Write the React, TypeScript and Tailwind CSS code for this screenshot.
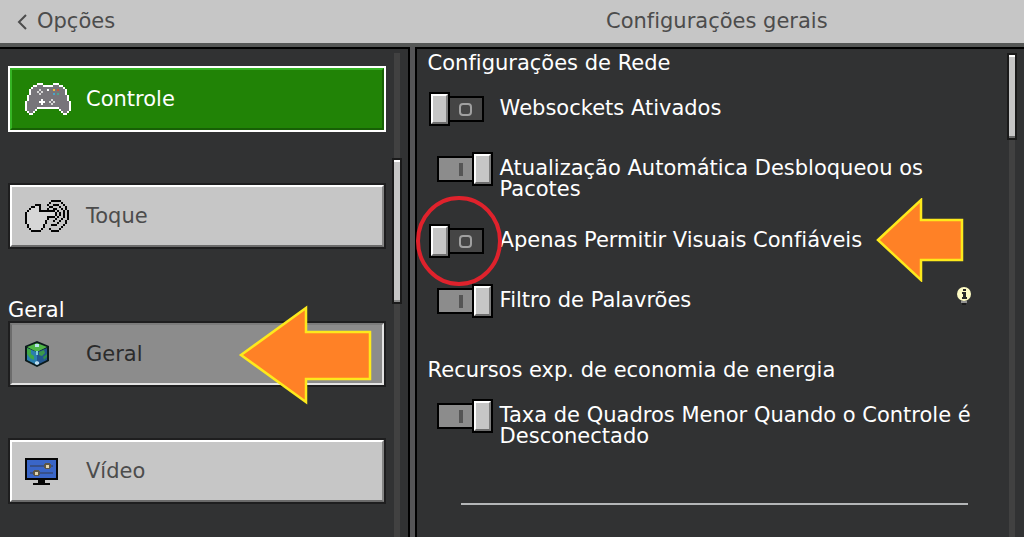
import type { ReactNode } from "react";

const PALETTE: Record<string, string> = {
  W: "#ffffff",
  G: "#77757a",
  L: "#d6d6d6",
  K: "#050505",
  Y: "#f0b93a",
  R: "#c2573f",
  B: "#4aa3c9",
  T: "#4fa58c",
};

const CONTROLLER = [
  "......WWW.....WWW......",
  "....WWGGGWWWWWGGGWW....",
  "...WGGGGGGGGGGGGGGGW...",
  "..WGGGGLGGGWGGYGRGGGW..",
  "..WGGGLGLGGGGGGGGGGGW..",
  "..WGGGGLGGGGGGBGTGGGW..",
  ".WGGGGGGGGGGGGGGGGGGGW.",
  ".WGGGGGGGGGGGGGGGGGGGW.",
  ".WGGGGGGWGGGGLGGGGGGGW.",
  "WGGGGGGWWWGGLGLGGGGGGGW",
  "WGGGGGGGWGGGGLGGGGGGGGW",
  "WGGGGGGGGGGGGGGGGGGGGGW",
  "WGGGGGWWWWWWWWWWWGGGGGW",
  "WGGGGW...........WGGGGW",
  ".WGGW.............WGGW.",
  "..WW...............WW..",
];

const HAND = [
  ".............KKKKK....",
  "............K.....K...",
  ".....KKK...K..KKK..K..",
  "...KKLLK....KK...K..K.",
  "..KLLLLK...K..KK..K.K.",
  ".KLLLLLKKKKKKKK.K..K.K",
  "KLLLLLLLLLLLLLLK.K.K.K",
  "KLLLLLLLLLLLLLLK.K.K.K",
  "KLLLLLLLLLLKKKK.K..K.K",
  "KLLLLLLLLLLK...K..K..K",
  "KLLLLLLLLLK...K..K..K.",
  "KLLLLLLLLLK.....K...K.",
  ".KLLLLLLLK...KKK...K..",
  ".KLLLLLLLK........K...",
  "..KLLLLLK...K....K....",
  "...KKKKK.....KKKK.....",
];

const PixelIcon = ({ rows, className }: { rows: string[]; className: string }) => (
  <svg viewBox={`0 0 ${rows[0].length} ${rows.length}`} className={className} shapeRendering="crispEdges" aria-hidden="true">
    {rows.flatMap((row, y) =>
      row.split("").map((c, x) =>
        c === "." ? null : <rect key={`${x}-${y}`} x={x} y={y} width="1" height="1" fill={PALETTE[c]} />
      )
    )}
  </svg>
);

const CubeIcon = () => (
  <svg viewBox="0 0 24 26" className="h-[26px] w-6" aria-hidden="true">
    <path d="M12 0 24 5V20L12 26 0 20V5Z" fill="#0b1a1c" />
    <path d="M12 2 22 6 12 11 2 6Z" fill="#4fb548" />
    <path d="M2 7 12 11V24L2 19Z" fill="#2b7fae" />
    <path d="M22 7 12 11V24L22 19Z" fill="#22568f" />
    <path d="M2 7 6 9V13L9 15V19L5 17 2 13Z" fill="#3fa845" />
    <path d="M14 11 19 9 20 12 17 15 14 14Z" fill="#3a9a4a" />
    <path d="M18 16 22 13V16L19 19Z" fill="#2f8b50" />
    <path d="M10 3H14V6H10Z" fill="#b9e3ee" />
    <path d="M11 10H13V14H11Z" fill="#83c9dd" />
    <path d="M10 21 12 20 14 21V23L12 24 10 23Z" fill="#b9dcee" />
  </svg>
);

const MonitorIcon = () => (
  <svg viewBox="0 0 33 27" className="h-[27px] w-[33px]" shapeRendering="crispEdges" aria-hidden="true">
    <path d="M0 0H33V22H20V25H25V27H8V25H13V22H0Z" fill="#060606" />
    <rect x="2" y="2" width="29" height="18" fill="#3a66c8" />
    <path d="M5 7H28V9H5ZM5 14H28V16H5Z" fill="#37508a" />
    <path d="M20 5H25V6H26V10H25V11H20V10H19V6H20ZM9 12H14V13H15V17H14V18H9V17H8V13H9Z" fill="#5c5648" />
    <rect x="21" y="7" width="3" height="3" fill="#e3d6b0" />
    <rect x="10" y="14" width="3" height="3" fill="#e3d6b0" />
  </svg>
);

const InfoIcon = () => (
  <svg viewBox="0 0 14 18" className="h-[18px] w-[14px]" aria-hidden="true">
    <ellipse cx="7" cy="7" rx="7" ry="7" fill="#fdfbc4" />
    <path d="M6 2H9V4H6ZM5 5H9V10H10V12H5V10H6V7H5Z" fill="#2a2a2a" />
    <path d="M4 14H10V16H4Z" fill="#8f8f8f" />
    <path d="M5 16H9V18H5Z" fill="#1b1b1b" />
  </svg>
);

type MenuButtonProps = { icon: ReactNode; label: string; variant?: "active" | "pressed" | "normal"; children?: ReactNode };

const MenuButton = ({ icon, label, variant = "normal", children }: MenuButtonProps) => {
  const outer = { active: "border-white", pressed: "border-[#1e1e1f]", normal: "border-[#1e1e1f]" }[variant];
  const inner = {
    active: "border-t-[#35b424] border-l-[#35b424] border-r-[#176005] border-b-[#176005] bg-[#218306] text-white",
    pressed: "border-t-[#7c7c7c] border-l-[#6c6c6c] border-r-[#e3e3e3] border-b-[#e3e3e3] bg-[#8c8c8c] text-[#2b2b2b]",
    normal: "border-t-white border-l-white border-r-[#858585] border-b-[#6b6b6b] bg-[#c6c6c6] text-[#4c4c4c]",
  }[variant];

  return (
    <button type="button" className={`relative block w-full border-2 text-left ${outer}`}>
      <span className={`flex h-[62px] items-center border-2 pl-[13px] ${inner}`}>
        <span className="w-[61px]">{icon}</span>
        <span>{label}</span>
      </span>
      {children}
    </button>
  );
};

const Knob = () => (
  <span className="h-[34px] w-[21px] border-2 border-black">
    <span className="block h-full border-2 border-t-white border-l-white border-r-[#7d7d7d] border-b-[#6d6d6d] bg-[#c6c6c6]" />
  </span>
);

type SettingProps = { label: string; on?: boolean; mark?: ReactNode; children?: ReactNode };

const Setting = ({ label, on = false, mark, children }: SettingProps) => (
  <div className="relative flex min-h-9 items-start">
    <label className="flex items-start">
      <input type="checkbox" defaultChecked={on} className="sr-only" />
      <span className={`relative flex w-[72px] shrink-0 items-center ${on ? "pl-[9px]" : "pl-px"}`}>
        {on ? (
          <>
            <span className="flex h-[26px] w-[35px] items-center justify-end border-2 border-r-0 border-black bg-[#8c8c8c] pr-[9px]">
              <span className="h-[13px] w-1 bg-[#555555]" />
            </span>
            <Knob />
          </>
        ) : (
          <>
            <Knob />
            <span className="flex h-[26px] w-[34px] items-center justify-center border-2 border-l-0 border-black bg-[#454545]">
              <span className="h-[13px] w-[13px] rounded-sm border-2 border-[#a0a0a0]" />
            </span>
          </>
        )}
        {mark}
      </span>
      <span className="pt-[6px] pr-3">{label}</span>
    </label>
    {children}
  </div>
);

export default function App() {
  return (
    <div className="flex min-h-screen flex-col bg-[#313233] font-['DejaVu_Sans',sans-serif] text-[21px] leading-[21px] text-white [font-variant-ligatures:none]">
      <header className="flex h-[47px] items-center border-b-4 border-[#555756] bg-[#c6c6c6] text-[#4c4c4c]">
        <div className="w-2/5 pl-[17px]">
          <button type="button" className="flex items-center gap-[10px]">
            <svg viewBox="0 0 10 16" className="h-4 w-[10px]" fill="none" stroke="currentColor" strokeWidth="2" aria-hidden="true">
              <path d="M9 1 2 8 9 15" />
            </svg>
            Opções
          </button>
        </div>
        <h1 className="flex-1 text-center">Configurações gerais</h1>
      </header>

      <div className="flex flex-1">
        <aside className="flex w-2/5 border-t-2 border-r-2 border-black pl-2">
          <nav className="flex-1 pt-[17px] pb-8">
            <MenuButton variant="active" label="Controle" icon={<PixelIcon rows={CONTROLLER} className="h-8 w-[46px]" />} />
            <div className="mt-[51px]">
              <MenuButton label="Toque" icon={<PixelIcon rows={HAND} className="h-8 w-[44px]" />} />
            </div>
            <h2 className="mt-[51px]">Geral</h2>
            <MenuButton variant="pressed" label="Geral" icon={<CubeIcon />}>
              <svg viewBox="0 0 134 100" className="absolute right-[12px] -top-[18px] h-[100px] w-[134px]" aria-hidden="true">
                <path d="M3 50 68 3V27H132V74H68V97Z" fill="#ff8126" stroke="#fde91c" strokeWidth="2.5" />
              </svg>
            </MenuButton>
            <div className="mt-[51px]">
              <MenuButton label="Vídeo" icon={<MonitorIcon />} />
            </div>
          </nav>
          <div className="mt-1 mr-[6px] ml-[6px] flex w-[10px] flex-col bg-[#414141] bg-clip-content px-[2px]">
            <div className="-mx-[2px] mt-[105px] h-[146px] border-2 border-[#1a1a1a] bg-[#c6c6c6]">
              <div className="h-full border-t-2 border-b-2 border-t-white border-b-[#8a8a8a]" />
            </div>
          </div>
        </aside>

        <div className="w-[5px] bg-[#555557]" />

        <main className="flex flex-1 border-t-2 border-l-2 border-black pl-[11px]">
          <div className="flex-1 pt-1">
            <h2>Configurações de Rede</h2>
            <div className="mt-[18px] flex flex-col gap-6">
              <Setting label="Websockets Ativados" />
              <Setting on label="Atualização Automática Desbloqueou os Pacotes" />
              <Setting
                label="Apenas Permitir Visuais Confiáveis"
                mark={
                  <svg viewBox="0 0 88 92" className="absolute -top-[29px] -left-[13px] h-[92px] w-[88px]" aria-hidden="true">
                    <ellipse cx="44" cy="46" rx="41" ry="43" fill="none" stroke="#df222c" strokeWidth="4" />
                  </svg>
                }
              >
                <svg viewBox="0 0 88 84" className="absolute -top-[26px] right-[43px] h-[84px] w-[88px]" aria-hidden="true">
                  <path d="M2 42 45 2V22H86V62H45V82Z" fill="#ff8126" stroke="#fde91c" strokeWidth="2.5" />
                </svg>
              </Setting>
              <Setting on label="Filtro de Palavrões">
                <div className="mt-[3px] mr-9 ml-auto">
                  <InfoIcon />
                </div>
              </Setting>
            </div>
            <h2 className="mt-10 mb-[18px]">Recursos exp. de economia de energia</h2>
            <Setting on label="Taxa de Quadros Menor Quando o Controle é Desconectado" />
            <hr className="mt-14 mr-[39px] ml-[33px] border-t-2 border-[#b4b6b8]" />
          </div>
          <div className="mt-1 mr-[7px] flex w-[10px] flex-col bg-[#414141] bg-clip-content px-[2px]">
            <div className="-mx-[2px] h-[87px] border-2 border-[#1a1a1a] bg-[#c6c6c6]">
              <div className="h-full border-t-2 border-b-2 border-t-white border-b-[#6a6a6a]" />
            </div>
          </div>
        </main>
      </div>
    </div>
  );
}
